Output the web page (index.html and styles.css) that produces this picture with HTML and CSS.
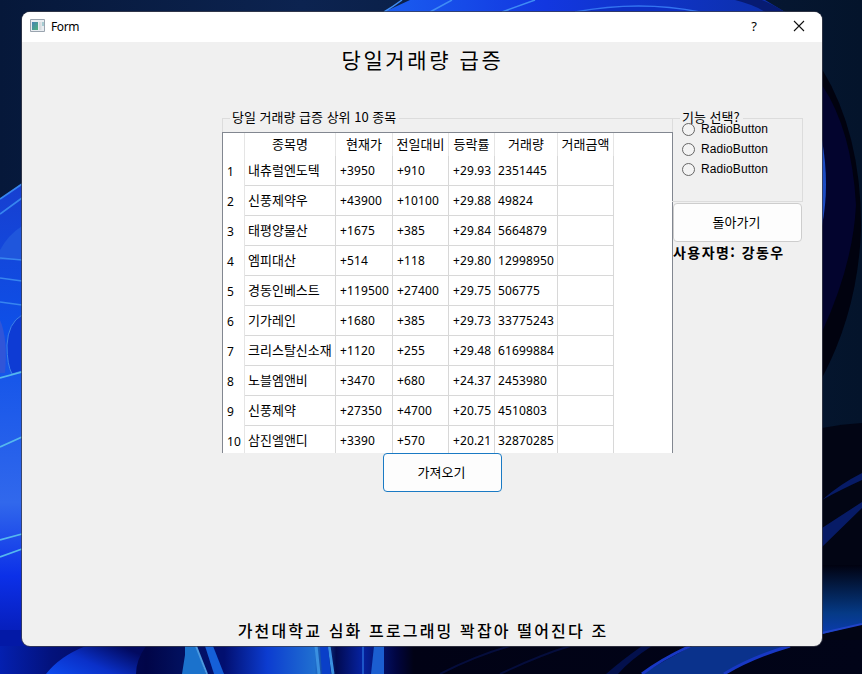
FILE: index.html
```html
<!DOCTYPE html>
<html lang="ko">
<head>
<meta charset="utf-8">
<title>Form</title>
<link rel="stylesheet" href="styles.css">
</head>
<body>
<svg class="wallpaper" viewBox="0 0 862 674" aria-hidden="true">
  <defs>
    <linearGradient id="navy" x1="0" x2="1"><stop offset="0" stop-color="#06183a"/><stop offset=".35" stop-color="#0c2350"/><stop offset="1" stop-color="#04142b"/></linearGradient>
    <linearGradient id="petal" x1="0" x2="1"><stop offset="0" stop-color="#1a5df0"/><stop offset=".4" stop-color="#1237e0"/><stop offset="1" stop-color="#0c2fa8"/></linearGradient>
    <linearGradient id="left" x1="0" x2="0" y1="0" y2="1"><stop offset="0" stop-color="#173fd0"/><stop offset=".3" stop-color="#0e50e8"/><stop offset=".65" stop-color="#3168ec"/><stop offset=".8" stop-color="#0c30e8"/><stop offset="1" stop-color="#02119a"/></linearGradient>
    <linearGradient id="bottom" gradientUnits="userSpaceOnUse" x1="0" x2="862" y1="0" y2="0"><stop offset="0" stop-color="#0420b0"/><stop offset=".06" stop-color="#03127c"/><stop offset=".17" stop-color="#010548"/><stop offset=".21" stop-color="#02105e"/><stop offset=".26" stop-color="#020f70"/><stop offset=".31" stop-color="#0c3cd0"/><stop offset=".365" stop-color="#2070d0"/><stop offset=".39" stop-color="#010a50"/><stop offset=".42" stop-color="#0622a0"/><stop offset=".46" stop-color="#010540"/><stop offset=".48" stop-color="#010215"/><stop offset="1" stop-color="#010418"/></linearGradient>
    <linearGradient id="glow" x1="0" x2="0" y1="0" y2="1"><stop offset="0" stop-color="#010210"/><stop offset=".7" stop-color="#053a86"/><stop offset="1" stop-color="#0b3cae"/></linearGradient>
    <linearGradient id="hill" x1="0" x2="1" y1="1" y2=".4"><stop offset="0" stop-color="#0d4cf0"/><stop offset=".5" stop-color="#0a30c8"/><stop offset="1" stop-color="#020a60"/></linearGradient>
  </defs>
  <rect width="862" height="674" fill="url(#navy)"/>
  <path d="M384 12 410 0H765L785 12Z" fill="url(#petal)"/>
  <path d="M384 12Q394 6 402 0M430 12 452 0M502 12 535 0" fill="none" stroke="#3f8cf5" stroke-width="1.5"/>
  <path d="M575 12Q640 0 700 12" fill="#0d2fc4" stroke="#3374f0" stroke-width="1.5"/>
  <path d="M735 0Q755 5 765 12H785Q772 4 762 0Z" fill="#071b72"/>
  <path d="M822 69Q862 135 861 230 858 310 822 378Z" fill="#01020f"/>
  <path d="M822 85Q852 130 856 205 853 265 822 332Z" fill="#03042e"/>
  <path d="M822 140Q830 185 822 226Z" fill="#1c4cc4"/>
  <path d="M822 428Q842 424 862 423V674H822Z" fill="#020514"/>
  <path d="M822 500Q840 484 862 473V508L822 547V528L862 502V480Q840 490 822 500Z" fill="#071b66"/>
  <path d="M0 199 22 184V674H0Z" fill="url(#left)"/>
  <path d="M0 250Q8 235 22 226V260H0Z" fill="#1f56dc"/>
  <path d="M0 320Q8 338 5 373H0Z" fill="#3155d8"/>
  <path d="M22 315Q8 323 7 345 7 365 12 374L22 371Z" fill="#0e3bd4" stroke="#3d82e8"/>
  <path d="M0 199 22 184M0 214 22 198M0 258 22 260M0 278 22 281M0 302 22 305" fill="none" stroke="#3785ef" stroke-width="1.7"/>
  <path d="M0 378 22 372M0 447 22 437M0 540 22 534M0 557 22 549" fill="none" stroke="#55b8ee" stroke-width="1.7"/>
  <path d="M0 640H862V674H0Z" fill="url(#bottom)"/>
  <path d="M0 630H22V640L30 646H0Z" fill="#0319a6"/>
  <path d="M822 565H862V624L822 634Z" fill="url(#glow)"/>
  <path d="M822 633 862 624" stroke="#2144c8" stroke-width="2"/>
  <path d="M46 674Q60 656 86 646H146Q136 660 136 674Z" fill="url(#hill)"/>
  <path d="M185 655V646H196L206 674H182Z" fill="#1b72cc"/>
  <path d="M196 646 207 674" stroke="#4b9ae0" stroke-width="2"/>
  <path d="M205 646H213L224 674H214Z" fill="#1560d8"/>
  <path d="M316 646 319 674M329 646 333 674" stroke="#3a90e0" stroke-width="3"/>
  <path d="M320 646H328L331 674H322Z" fill="#0a3fc8"/>
  <path d="M363 646V674" stroke="#1c55c8" stroke-width="2"/>
  <path d="M374 646H384V674H371Z" fill="#1b5ed0"/>
  <path d="M440 674Q475 656 510 646M500 674Q540 655 570 646" fill="none" stroke="#050d3c" stroke-width="2"/>
  <path d="M642 646H652Q630 660 618 674H606Q622 660 642 646Z" fill="#03104c"/>
  <path d="M692 646H790Q752 657 724 674H642Q665 660 692 646Z" fill="#0a328c"/>
  <path d="M690 646Q660 660 642 674M790 646Q752 657 724 674" fill="none" stroke="#1838c4" stroke-width="3"/>
</svg>

<main class="window">
  <header class="titlebar">
    <svg class="app-icon" viewBox="0 0 16 14"><defs><linearGradient id="ic" x1="0" y1="0" x2="1" y2="1"><stop stop-color="#4682b4"/><stop offset="1" stop-color="#4fb27c"/></linearGradient></defs><path d="M.5.5h14v12H.5z" fill="#e9edf1" stroke="#9aa4af"/><path d="M2 3h6v8H2z" fill="url(#ic)"/><path d="M9 3h2.500v8H9z" fill="#d8dcdf"/><path d="M12 3h2v4h-2z" fill="#a5cbd1"/></svg>
    <span class="caption">Form</span>
    <span class="help">?</span>
    <svg class="close" viewBox="0 0 12 12"><path d="m1 1 10 10M11 1 1 11" stroke="#111" stroke-width="1.100"/></svg>
  </header>
  <h1 class="title">당일거래량 급증</h1>
  <div class="content">
    <section class="ranking">
      <div class="group-head"><span class="stub"></span><span class="legend">당일 거래량 급증 상위 10 종목</span><span class="rule"></span></div>
      <div class="table-box">
        <table>
          <colgroup><col class="c0"><col class="c1"><col class="c2"><col class="c3"><col class="c4"><col class="c5"><col class="c6"></colgroup>
          <thead><tr><th></th><th>종목명</th><th>현재가</th><th>전일대비</th><th>등락률</th><th>거래량</th><th>거래금액</th></tr></thead>
          <tbody>
            <tr><th>1</th><td class="name">내츄럴엔도텍</td><td>+3950</td><td>+910</td><td>+29.93</td><td class="vol">2351445</td><td></td></tr>
            <tr><th>2</th><td class="name">신풍제약우</td><td>+43900</td><td>+10100</td><td>+29.88</td><td class="vol">49824</td><td></td></tr>
            <tr><th>3</th><td class="name">태평양물산</td><td>+1675</td><td>+385</td><td>+29.84</td><td class="vol">5664879</td><td></td></tr>
            <tr><th>4</th><td class="name">엠피대산</td><td>+514</td><td>+118</td><td>+29.80</td><td class="vol">12998950</td><td></td></tr>
            <tr><th>5</th><td class="name">경동인베스트</td><td>+119500</td><td>+27400</td><td>+29.75</td><td class="vol">506775</td><td></td></tr>
            <tr><th>6</th><td class="name">기가레인</td><td>+1680</td><td>+385</td><td>+29.73</td><td class="vol">33775243</td><td></td></tr>
            <tr><th>7</th><td class="name">크리스탈신소재</td><td>+1120</td><td>+255</td><td>+29.48</td><td class="vol">61699884</td><td></td></tr>
            <tr><th>8</th><td class="name">노블엠앤비</td><td>+3470</td><td>+680</td><td>+24.37</td><td class="vol">2453980</td><td></td></tr>
            <tr><th>9</th><td class="name">신풍제약</td><td>+27350</td><td>+4700</td><td>+20.75</td><td class="vol">4510803</td><td></td></tr>
            <tr><th>10</th><td class="name">삼진엘앤디</td><td>+3390</td><td>+570</td><td>+20.21</td><td class="vol">32870285</td><td></td></tr>
          </tbody>
        </table>
      </div>
      <button class="btn fetch">가져오기</button>
    </section>
    <aside class="side">
      <div class="options">
        <div class="group-head"><span class="stub"></span><span class="legend">기능 선택?</span><span class="rule"></span></div>
        <div class="radios">
          <label><i></i>RadioButton</label>
          <label><i></i>RadioButton</label>
          <label><i></i>RadioButton</label>
        </div>
      </div>
      <button class="btn back">돌아가기</button>
      <p class="user">사용자명: 강동우</p>
    </aside>
  </div>
  <footer class="foot">가천대학교 심화 프로그래밍 꽉잡아 떨어진다 조</footer>
</main>
</body>
</html>
```
FILE: styles.css
```css
* { box-sizing: border-box; }

body {
  margin: 0;
  width: 862px;
  height: 674px;
  overflow: hidden;
  padding: 12px 0 0 22px;
  font: 13px/16px "Noto Sans CJK KR", sans-serif;
  color: #000;
}

.wallpaper {
  position: absolute;
  inset: 0;
  width: 862px;
  height: 674px;
  z-index: -1;
}

.window {
  display: flex;
  flex-direction: column;
  width: 800px;
  height: 634px;
  overflow: hidden;
  border-radius: 8px;
  background: #f0f0f0;
  box-shadow: 0 0 0 1px rgba(60, 62, 75, .75);
}

.titlebar {
  display: flex;
  align-items: center;
  flex: none;
  height: 30px;
  padding: 0 17px 0 8px;
  background: #fff;
}
.app-icon { width: 16px; height: 14px; margin-bottom: 2px; }
.caption { margin-left: 5px; font: 12px/16px "Noto Sans", sans-serif; letter-spacing: -.4px; }
.help { margin: 0 36px 2px auto; font: 13px/16px "Noto Sans", sans-serif; }
.close { width: 12px; height: 12px; margin-bottom: 2px; }

.title {
  flex: none;
  height: 76px;
  margin: 0;
  padding: 2px 0 0 1px;
  text-align: center;
  font-size: 21px;
  font-weight: 400;
  line-height: 30px;
  letter-spacing: 2.6px;
}

.content { display: flex; flex: 1; padding-left: 200px; align-items: flex-start; }

.ranking { display: flex; flex-direction: column; width: 451px; margin-right: -1px; }

.group-head { display: flex; height: 14px; }
.stub { width: 8px; border: solid #dcdcdc; border-width: 1px 0 0 1px; }
.legend { margin-top: -9px; padding: 0 3px 0 2px; white-space: nowrap; }
.rule { flex: 1; border-top: 1px solid #dcdcdc; }

.table-box {
  height: 321px;
  overflow: hidden;
  background: #fff;
  border: solid #828790;
  border-width: 1px 1px 0;
}
table { width: 391px; table-layout: fixed; border-collapse: separate; border-spacing: 0; }
.c0 { width: 22px; }
.c1 { width: 91px; }
.c2 { width: 57px; }
.c3 { width: 56px; }
.c4 { width: 46px; }
.c5 { width: 63px; }
.c6 { width: 56px; }
th, td { padding: 0; font-weight: 400; white-space: nowrap; border-right: 1px solid #d8d8d8; }
thead th { height: 23px; padding-bottom: 2px; border-color: #e5e5e5; }
tbody th, td { height: 30px; font: 12px/16px "Noto Sans", "Noto Sans CJK KR", sans-serif; text-align: left; padding-left: 4px; letter-spacing: .14px; }
tbody th { border-color: #e5e5e5; padding-top: 2px; }
td { border-bottom: 1px solid #d8d8d8; }
td.name { padding: 0 0 2px 3px; font: 13px/16px "Noto Sans CJK KR", sans-serif; letter-spacing: 0; }
td.vol { padding-left: 3px; }

.btn {
  height: 39px;
  padding: 0 2px 2px 0;
  border: 1px solid #cdcdcd;
  border-radius: 4px;
  background: #fdfdfd;
  color: #000;
  font: 13px/16px "Noto Sans CJK KR", sans-serif;
}
.fetch { width: 119px; margin-left: 161px; border-color: #1a7ac4; }

.side { width: 131px; }
.options { height: 84px; border: solid #dcdcdc; border-width: 0 1px 1px 0; }
.options .stub { width: 8px; }
.radios { display: flex; flex-direction: column; gap: 4px; margin: -11px 0 0 10px; }
.radios label { display: flex; align-items: center; height: 16px; font: 12px/16px "Liberation Sans", sans-serif; letter-spacing: .1px; }
.radios i { width: 13px; height: 13px; margin-right: 6px; border: 1px solid #666; border-radius: 50%; background: #f3f3f3; }
.back { display: block; width: 129px; margin: 1px 0 0 1px; }
.user { margin: 2px 0 0 1px; font-size: 14px; font-weight: 700; letter-spacing: 1.45px; white-space: nowrap; }

.foot {
  flex: none;
  height: 28px;
  text-align: center;
  font-size: 16px;
  font-weight: 500;
  line-height: 24px;
  letter-spacing: 2.15px;
  padding-left: 2px;
}
```
